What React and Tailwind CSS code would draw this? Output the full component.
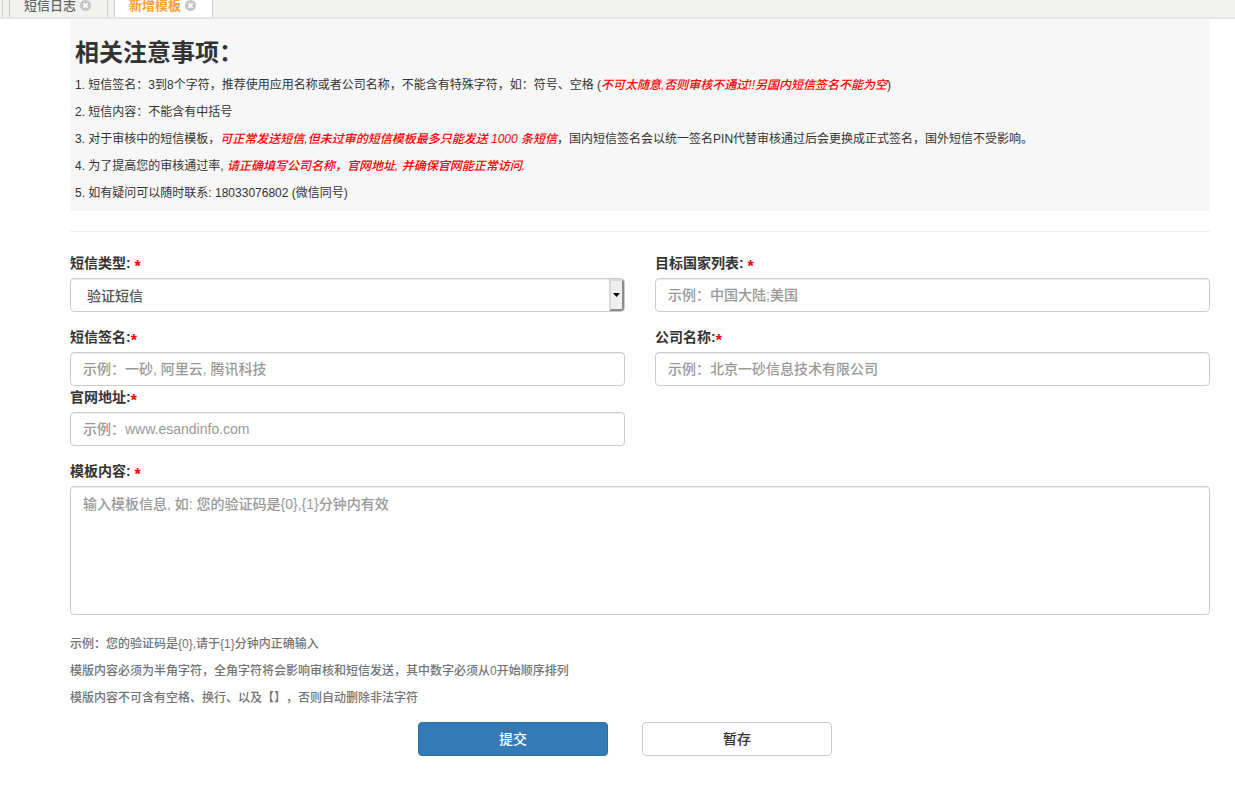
import React, { useState } from 'react';

const tabs = [
  { id: 'log', label: '短信日志' },
  { id: 'new', label: '新增模板' }
];

const notices = [
  <>
    1. 短信签名：3到8个字符，推荐使用应用名称或者公司名称，不能含有特殊字符，如：符号、空格 (
    <em className="font-medium text-[#ff0000]">不可太随意,否则审核不通过!!另国内短信签名不能为空</em>)
  </>,
  <>2. 短信内容：不能含有中括号</>,
  <>
    3. 对于审核中的短信模板，
    <em className="font-medium text-[#ff0000]">可正常发送短信,但未过审的短信模板最多只能发送 1000 条短信</em>
    ，国内短信签名会以统一签名PIN代替审核通过后会更换成正式签名，国外短信不受影响。
  </>,
  <>
    4. 为了提高您的审核通过率, <em className="font-medium text-[#ff0000]">请正确填写公司名称，官网地址, 并确保官网能正常访问.</em>
  </>,
  <>5. 如有疑问可以随时联系: 18033076802 (微信同号)</>
];

const hints = [
  '示例：您的验证码是{0},请于{1}分钟内正确输入',
  '模版内容必须为半角字符，全角字符将会影响审核和短信发送，其中数字必须从0开始顺序排列',
  '模版内容不可含有空格、换行、以及【】，否则自动删除非法字符'
];

const controlClass =
  'block w-full rounded border border-[#ccc] bg-white px-3 text-sm font-medium leading-5 text-[#555] placeholder-[#999] shadow-[inset_0_1px_1px_rgba(0,0,0,0.075)] outline-none focus:border-[#66afe9]';

const CloseIcon = () => (
  <svg width="11" height="11" viewBox="0 0 11 11" aria-hidden="true">
    <circle cx="5.5" cy="5.5" r="5.5" fill="#c6c6c6" />
    <path d="M3.4 3.4l4.2 4.2M7.6 3.4L3.4 7.6" stroke="#fff" strokeWidth="1.8" />
  </svg>
);

const FieldLabel = ({ htmlFor, spaced, children }) => (
  <label htmlFor={htmlFor} className="mb-[5px] block h-5 text-sm font-bold leading-5 text-[#333]">
    {children}:{spaced && ' '}
    <span className="align-[-4px] text-base leading-none text-[#ff0000]">*</span>
  </label>
);

const TextField = ({ id, label, spaced, placeholder }) => (
  <div>
    <FieldLabel htmlFor={id} spaced={spaced}>{label}</FieldLabel>
    <input id={id} type="text" placeholder={placeholder} className={`${controlClass} h-[34px]`} />
  </div>
);

const TabBar = ({ active, onChange }) => (
  <nav className="flex h-[19px] gap-[6px] border-b-2 border-[#e4e4e4] bg-[#f2f2f0]">
    <div className="w-[3px] border-r border-[#ccc]" />
    {tabs.map((tab) => (
      <div
        key={tab.id}
        className={`flex items-start gap-1 border-x border-[#ccc] pl-[14px] pr-4 ${
          tab.id === active ? 'bg-white text-[#ff9f35]' : 'text-[#666]'
        }`}
      >
        <button
          type="button"
          onClick={() => onChange(tab.id)}
          className={`text-[13px] leading-3 ${tab.id === active ? 'font-bold' : 'font-medium'}`}
        >
          {tab.label}
        </button>
        <button type="button" aria-label="关闭">
          <CloseIcon />
        </button>
      </div>
    ))}
  </nav>
);

export default function App() {
  const [active, setActive] = useState('new');

  return (
    <div className="min-h-screen bg-white font-['Liberation_Sans','Noto_Sans_CJK_SC',sans-serif] text-[#333] [text-spacing-trim:space-all]">
      <TabBar active={active} onChange={setActive} />

      <main className="pb-7 pl-[70px] pr-[25px]">
        <section className="bg-[#f7f7f7] px-[5px] pb-[9px] pt-[21px]">
          <h1 className="text-2xl font-bold leading-[26px]">相关注意事项：</h1>
          <div className="mt-[11px] space-y-[10px] text-xs leading-[17px]">
            {notices.map((notice, i) => (
              <p key={i}>{notice}</p>
            ))}
          </div>
        </section>

        <hr className="mb-[21px] mt-5 border-[#eee]" />

        <form onSubmit={(e) => e.preventDefault()}>
          <div className="grid grid-cols-2 gap-x-[30px]">
            <div className="mb-[15px]">
              <FieldLabel htmlFor="smsType" spaced>短信类型</FieldLabel>
              <div className="relative">
                <select id="smsType" className={`${controlClass} h-[34px] appearance-none pl-4 pt-px`}>
                  <option>验证短信</option>
                </select>
                <span className="pointer-events-none absolute inset-y-px right-px flex w-[15px] items-center justify-center rounded-r-[3px] border-2 border-b-[#8c8c8c] border-l-[#d8d8d8] border-r-[#8c8c8c] border-t-[#d8d8d8] bg-[#efefef]">
                  <svg width="7" height="4" viewBox="0 0 7 4" className="shrink-0" aria-hidden="true">
                    <path d="M0 0h7L3.5 4z" fill="#000" />
                  </svg>
                </span>
              </div>
            </div>
            <TextField id="countries" label="目标国家列表" spaced placeholder="示例：中国大陆;美国" />
            <TextField id="sign" label="短信签名" placeholder="示例：一砂, 阿里云, 腾讯科技" />
            <TextField id="company" label="公司名称" placeholder="示例：北京一砂信息技术有限公司" />
            <div className="mt-px">
              <TextField id="site" label="官网地址" placeholder="示例：www.esandinfo.com" />
            </div>
          </div>

          <div className="mt-[15px]">
            <FieldLabel htmlFor="content" spaced>模板内容</FieldLabel>
            <textarea
              id="content"
              placeholder="输入模板信息, 如: 您的验证码是{0},{1}分钟内有效"
              className={`${controlClass} h-[129px] resize-none py-[7px]`}
            />
          </div>

          <div className="mt-[21px] space-y-[10px] text-xs font-medium leading-[17px] text-[#737373]">
            {hints.map((hint) => (
              <p key={hint}>{hint}</p>
            ))}
          </div>

          <div className="mt-[15px] flex justify-center gap-[34px] pr-[30px]">
            <button
              type="submit"
              className="h-[34px] w-[190px] rounded border border-[#2e6da4] bg-[#337ab7] text-sm font-medium leading-5 text-white"
            >
              提交
            </button>
            <button
              type="button"
              className="h-[34px] w-[190px] rounded border border-[#ccc] bg-white text-sm font-medium leading-5 text-[#333]"
            >
              暂存
            </button>
          </div>
        </form>
      </main>
    </div>
  );
}
